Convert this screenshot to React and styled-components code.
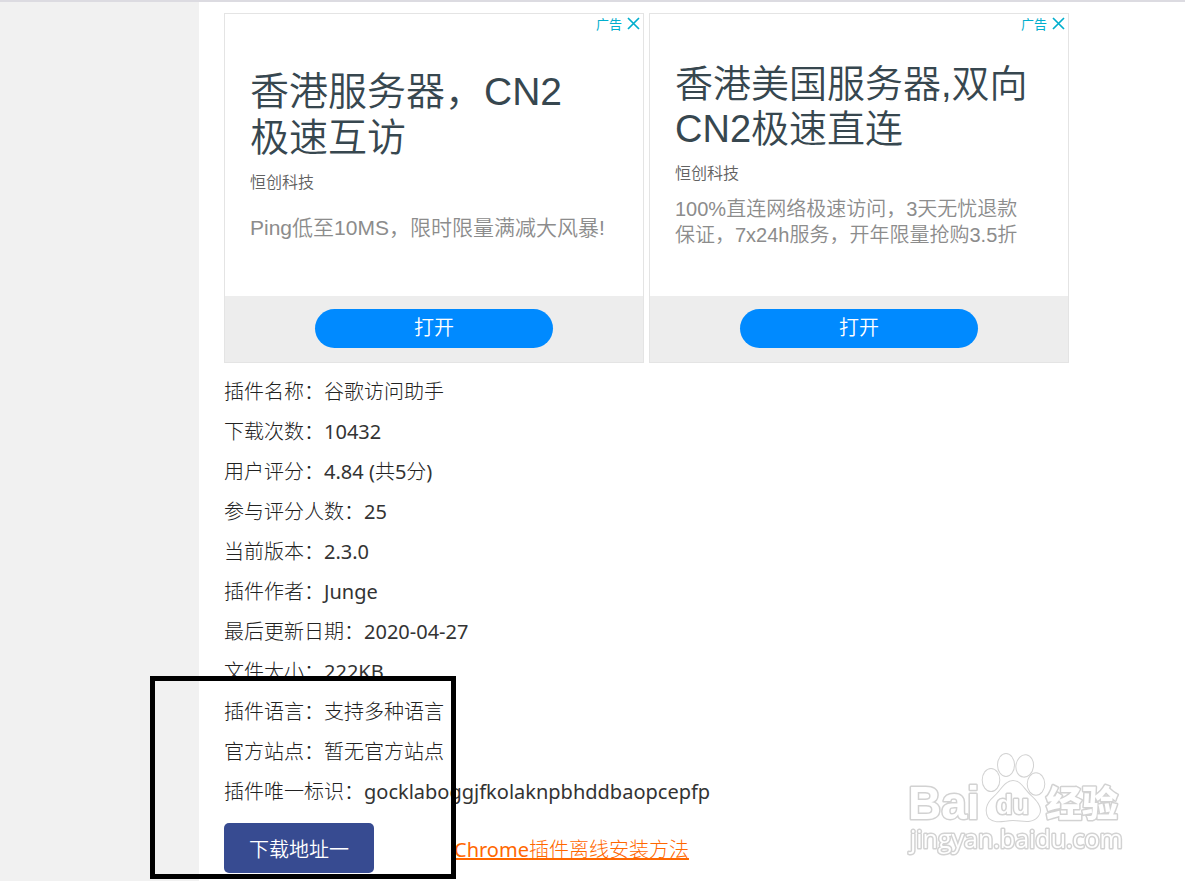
import React from 'react'
import styled, { createGlobalStyle } from 'styled-components'

const GlobalStyle = createGlobalStyle`
    * {
        box-sizing: border-box;
    }

    body {
        margin: 0;
        background: #fff;
        color: #333;
        font-family: "Noto Sans", "Noto Sans CJK SC", sans-serif;
        font-size: 20px;
    }
`

const Page = styled.div`
    display: flex;
    position: relative;
    min-height: 100vh;
    border-top: solid 2px #dcdbe1;
    overflow: hidden;
`

const Sidebar = styled.aside`
    flex: 0 0 199px;
    background: #f1f1f1;
`

const Main = styled.main`
    flex: 1;
    min-width: 0;
    padding: 11px 25px 8px;
`

const AdRow = styled.div`
    display: flex;
    gap: 5px;
    max-width: 845px;
    margin-bottom: 8px;
`

const AdCard = styled.section`
    display: flex;
    flex: 1;
    flex-direction: column;
    position: relative;
    min-height: 350px;
    border: solid 1px #e4e4e4;
    font-family: "Liberation Sans", "Noto Sans CJK SC", sans-serif;
    font-weight: 350;
`

const AdMark = styled.div`
    display: flex;
    align-items: center;
    gap: 5px;
    position: absolute;
    top: 0;
    right: 3px;
    height: 19px;
    color: #00aecd;
    font-size: 13px;
    font-weight: 400;
`

const CloseButton = styled.button`
    display: flex;
    padding: 0;
    border: none;
    background: none;
    color: inherit;
    cursor: pointer;
`

const AdBody = styled.div`
    display: flex;
    flex: 1;
    flex-direction: column;
    justify-content: center;
    padding: 0 25px;
`

const AdTitle = styled.h2`
    margin: 0;
    color: #37474f;
    font-size: ${({ large }) => (large ? '39px' : '38px')};
    font-weight: 350;
    line-height: ${({ large }) => (large ? '46px' : '45px')};
`

const AdBrand = styled.p`
    margin: 10px 0 0;
    color: #616161;
    font-size: 16px;
    line-height: 24px;
`

const AdText = styled.p`
    margin: ${({ large }) => (large ? '20px' : '10px')} 0 0;
    color: #8c8c8c;
    font-size: ${({ large }) => (large ? '21px' : '20px')};
    line-height: 26px;
`

const AdFooter = styled.div`
    display: flex;
    align-items: flex-start;
    justify-content: center;
    height: 66px;
    padding-top: 13px;
    background: #ededed;
`

const OpenButton = styled.button`
    width: 238px;
    height: 39px;
    padding: 0;
    border: none;
    border-radius: 20px;
    background: #008aff;
    color: #fff;
    font-family: inherit;
    font-size: 20px;
    font-weight: 350;
    line-height: 39px;
    cursor: pointer;
`

const InfoList = styled.ul`
    margin: 0;
    padding: 0;
    list-style: none;
`

const InfoItem = styled.li`
    height: 40px;
    line-height: 40px;
    white-space: nowrap;
`

const Thin = styled.span`
    font-family: "Noto Sans CJK SC", sans-serif;
    font-weight: 300;
`

const Label = styled(Thin)`
    color: #222;
`

const Marked = styled.div`
    position: relative;
`

/* hand-drawn box round the download area */
const MarkerBox = styled.div`
    position: absolute;
    top: -15px;
    left: -74px;
    width: 306px;
    height: 203px;
    border: solid 5px #000;
    pointer-events: none;
`

const Actions = styled.div`
    display: flex;
    align-items: center;
    gap: 80px;
    margin-top: 12px;
`

const DownloadButton = styled.button`
    height: 50px;
    padding: 0 25px;
    border: none;
    border-radius: 5px;
    background: #374b91;
    color: #fff;
    font-family: inherit;
    font-size: 20px;
    font-weight: 350;
    cursor: pointer;
`

const HelpLink = styled.a`
    color: #ff6700;
    text-decoration: underline;
    white-space: nowrap;
`

const Watermark = styled.svg`
    position: absolute;
    right: 55px;
    bottom: 16px;
    pointer-events: none;
`

const ads = [
    {
        key: 'cn2',
        large: true,
        title: ['香港服务器，CN2', '极速互访'],
        brand: '恒创科技',
        text: ['Ping低至10MS，限时限量满减大风暴!'],
    },
    {
        key: 'hkus',
        large: false,
        title: ['香港美国服务器,双向', 'CN2极速直连'],
        brand: '恒创科技',
        text: ['100%直连网络极速访问，3天无忧退款', '保证，7x24h服务，开年限量抢购3.5折'],
    },
]

const info = [
    { label: '插件名称', value: <Label>谷歌访问助手</Label> },
    { label: '下载次数', value: '10432' },
    { label: '用户评分', value: <>4.84 (<Label>共</Label>5<Label>分</Label>)</> },
    { label: '参与评分人数', value: '25' },
    { label: '当前版本', value: '2.3.0' },
    { label: '插件作者', value: 'Junge' },
    { label: '最后更新日期', value: '2020-04-27' },
    { label: '文件大小', value: '222KB' },
]

const moreInfo = [
    { label: '插件语言', value: <Label>支持多种语言</Label> },
    { label: '官方站点', value: <Label>暂无官方站点</Label> },
    { label: '插件唯一标识', value: 'gocklaboggjfkolaknpbhddbaopcepfp' },
]

const Lines = ({ lines }) => lines.map((line, i) => (
    <React.Fragment key={line}>
        {i > 0 && <br />}
        {line}
    </React.Fragment>
))

const Ad = ({ ad }) => (
    <AdCard>
        <AdMark>
            <span>广告</span>
            <CloseButton aria-label="关闭">
                <svg width="13" height="13" viewBox="0 0 13 13" fill="none" stroke="currentColor" strokeWidth="1.7">
                    <path d="M1 1L12 12M12 1L1 12" />
                </svg>
            </CloseButton>
        </AdMark>
        <AdBody>
            <AdTitle large={ad.large ? 1 : 0}><Lines lines={ad.title} /></AdTitle>
            <AdBrand>{ad.brand}</AdBrand>
            <AdText large={ad.large ? 1 : 0}><Lines lines={ad.text} /></AdText>
        </AdBody>
        <AdFooter>
            <OpenButton>打开</OpenButton>
        </AdFooter>
    </AdCard>
)

const Info = ({ items }) => (
    <InfoList>
        {items.map((item) => (
            <InfoItem key={item.label}>
                <Label>{item.label}：</Label>{item.value}
            </InfoItem>
        ))}
    </InfoList>
)

const BaiduMark = () => (
    <Watermark width="226" height="120" viewBox="0 0 226 120">
        <defs>
            <filter id="soft" x="-5%" y="-5%" width="110%" height="110%">
                <feGaussianBlur stdDeviation="0.6" />
            </filter>
        </defs>
        <g fill="#fff" stroke="#d2d2d2" strokeWidth="3" strokeLinejoin="round" paintOrder="stroke" filter="url(#soft)">
            <text x="4" y="74" fontSize="46" fontFamily="Liberation Sans, sans-serif" fontWeight="700">Bai</text>
            <g strokeWidth="2">
                <ellipse cx="87" cy="35" rx="8.3" ry="11" />
                <ellipse cx="102" cy="20" rx="8" ry="11" />
                <ellipse cx="120.7" cy="21" rx="8.3" ry="10.7" transform="rotate(8 121 21)" />
                <ellipse cx="132" cy="39" rx="8.3" ry="10.7" />
                <path d="M109 36C117 36 120 45 127 51C136 59 138 66 134 71C128 79 118 75 109 75C100 75 92 79 85 73C81 67 82 59 90 52C97 46 101 36 109 36Z" />
            </g>
            <text x="92" y="69" fontSize="27" fontFamily="Liberation Sans, sans-serif" fontWeight="700">du</text>
            <text x="142" y="72" fontSize="36" fontFamily="Noto Sans CJK SC, sans-serif" fontWeight="900">经验</text>
            <text x="6" y="103" fontSize="25" fontFamily="Open Sans, sans-serif">jingyan.baidu.com</text>
        </g>
    </Watermark>
)

const App = () => {
    return (
        <>
            <GlobalStyle />
            <Page>
                <Sidebar />
                <Main>
                    <AdRow>
                        {ads.map((ad) => <Ad key={ad.key} ad={ad} />)}
                    </AdRow>
                    <Info items={info} />
                    <Marked>
                        <Info items={moreInfo} />
                        <Actions>
                            <DownloadButton>下载地址一</DownloadButton>
                            <HelpLink href="#install">Chrome<Thin>插件离线安装方法</Thin></HelpLink>
                        </Actions>
                        <MarkerBox />
                    </Marked>
                </Main>
                <BaiduMark />
            </Page>
        </>
    )
}

export default App
